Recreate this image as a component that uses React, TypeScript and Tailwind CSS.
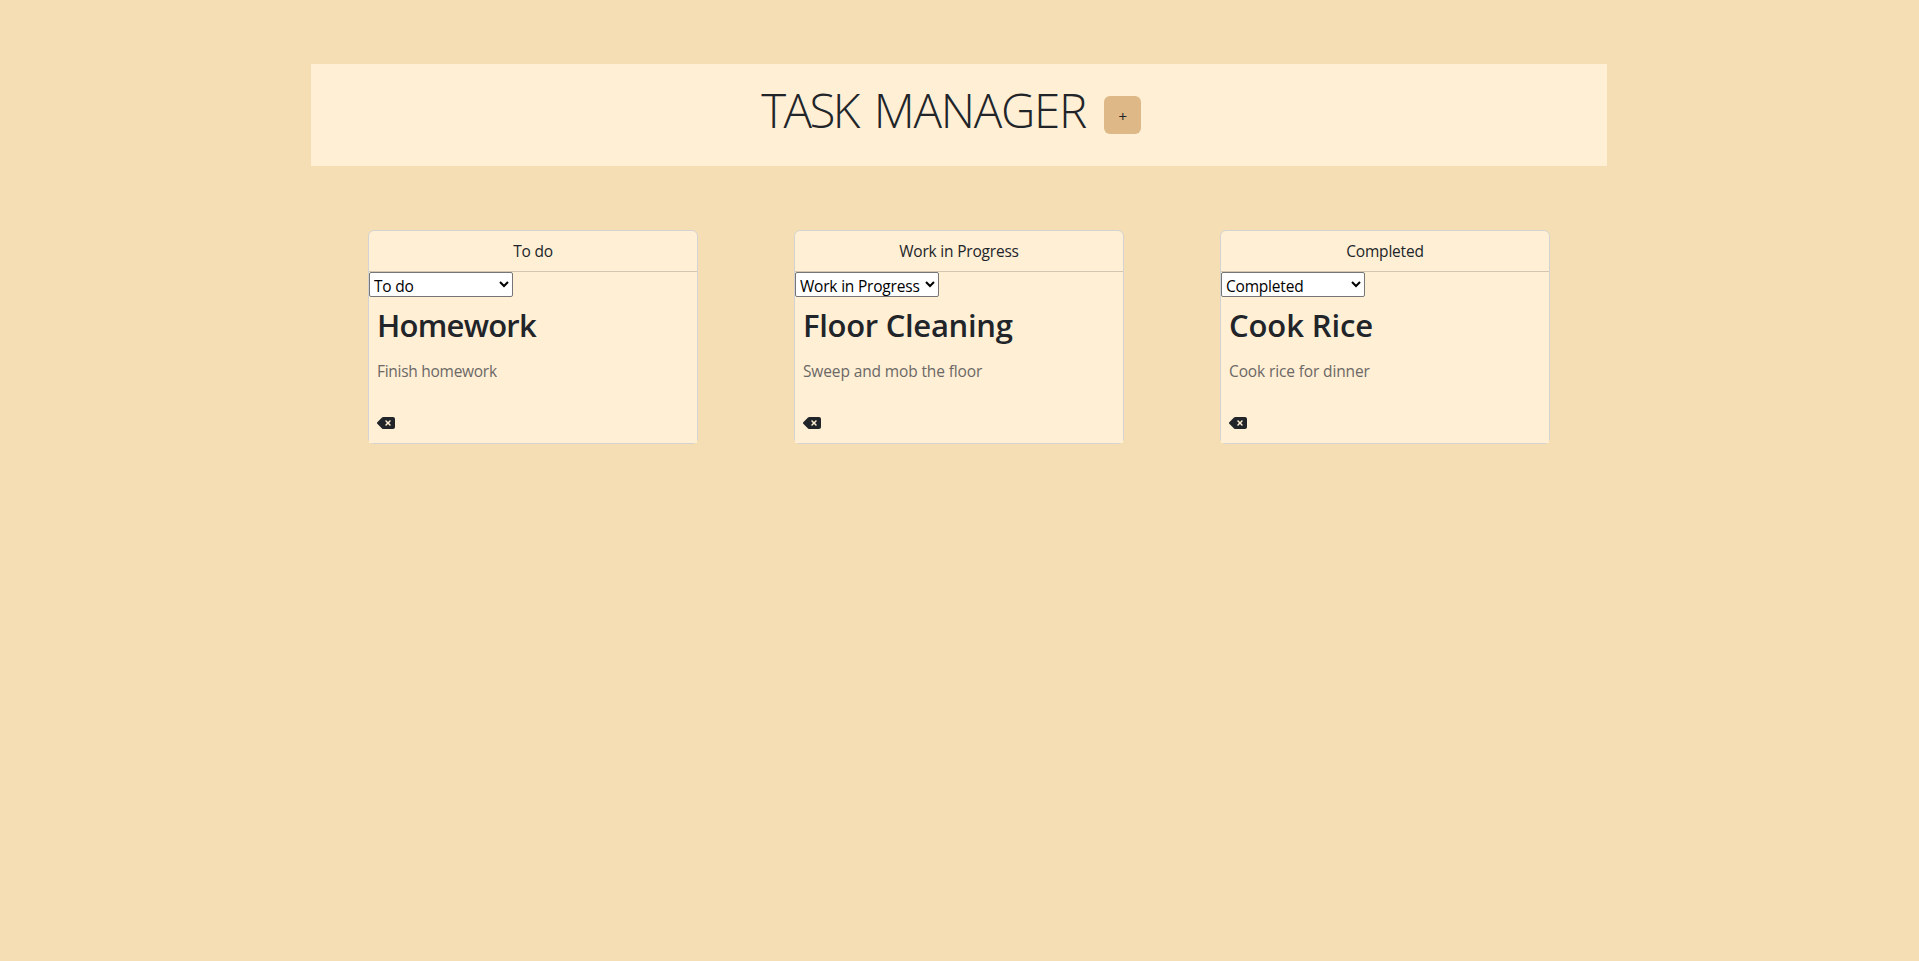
import { useState } from "react";
import { FaDeleteLeft } from "react-icons/fa6";

type Status = "To do" | "Work in Progress" | "Completed";

interface Task {
  title: string;
  description: string;
  status: Status;
  titleTracking: string;
  textTracking: string;
}

const statuses: Status[] = ["To do", "Work in Progress", "Completed"];

const initialTasks: Task[] = [
  {
    title: "Homework",
    description: "Finish homework",
    status: "To do",
    titleTracking: "tracking-[-0.75px]",
    textTracking: "tracking-[-0.28px]",
  },
  {
    title: "Floor Cleaning",
    description: "Sweep and mob the floor",
    status: "Work in Progress",
    titleTracking: "tracking-[-0.3px]",
    textTracking: "tracking-[-0.13px]",
  },
  {
    title: "Cook Rice",
    description: "Cook rice for dinner",
    status: "Completed",
    titleTracking: "tracking-[-0.1px]",
    textTracking: "tracking-[-0.13px]",
  },
];

function TaskCard({ task }: { task: Task }) {
  const [status, setStatus] = useState<Status>(task.status);
  return (
    <article className="mx-12 flex h-[214px] flex-1 flex-col rounded-md border border-[#d3d3d3] bg-[#ffefd5]">
      <header className="h-[41px] border-b border-[#d2c5b1] pt-2 text-center leading-6 tracking-[-0.2px]">
        {status}
      </header>
      <div className="flex-1 bg-[#ffefd5]">
        <select
          value={status}
          onChange={(e) => setStatus(e.target.value as Status)}
          className="block h-[25px] w-36 rounded-[2px] border border-[#767676] bg-white pt-px tracking-[-0.2px] text-black"
        >
          {statuses.map((s) => (
            <option key={s}>{s}</option>
          ))}
        </select>
        <div className="px-2 pt-[9px]">
          <h2 className={`text-[31px] leading-[38px] font-semibold ${task.titleTracking}`}>{task.title}</h2>
          <p className={`mt-[15px] leading-6 text-[#6b6865] ${task.textTracking}`}>{task.description}</p>
          <button className="mt-8 block" aria-label="Delete task">
            <FaDeleteLeft className="h-4 w-[18px]" />
          </button>
        </div>
      </div>
    </article>
  );
}

export default function App() {
  return (
    <div className="min-h-[961px] bg-[#f5deb3] pt-16 pr-px font-['Open_Sans','Noto_Sans',sans-serif] text-[15.5px] text-[#212529]">
      <div className="mx-auto flex h-[102px] w-[1296px] items-start justify-center gap-[18px] bg-[#ffefd5] pt-[17px]">
        <h1 className="text-[47.5px] leading-[58px] font-light tracking-[-1.3px]">
          <span className="tracking-[-2.6px]">TASK</span> <span className="ml-[5px]">MANAGER</span>
        </h1>
        <button className="mt-[15px] mr-4 h-[38px] w-[37px] rounded-md bg-[#deb887] pt-0.5 pl-px text-[15px]">+</button>
      </div>
      <main className="mx-auto mt-16 flex w-[1278px]">
        {initialTasks.map((task) => (
          <TaskCard key={task.title} task={task} />
        ))}
      </main>
    </div>
  );
}
